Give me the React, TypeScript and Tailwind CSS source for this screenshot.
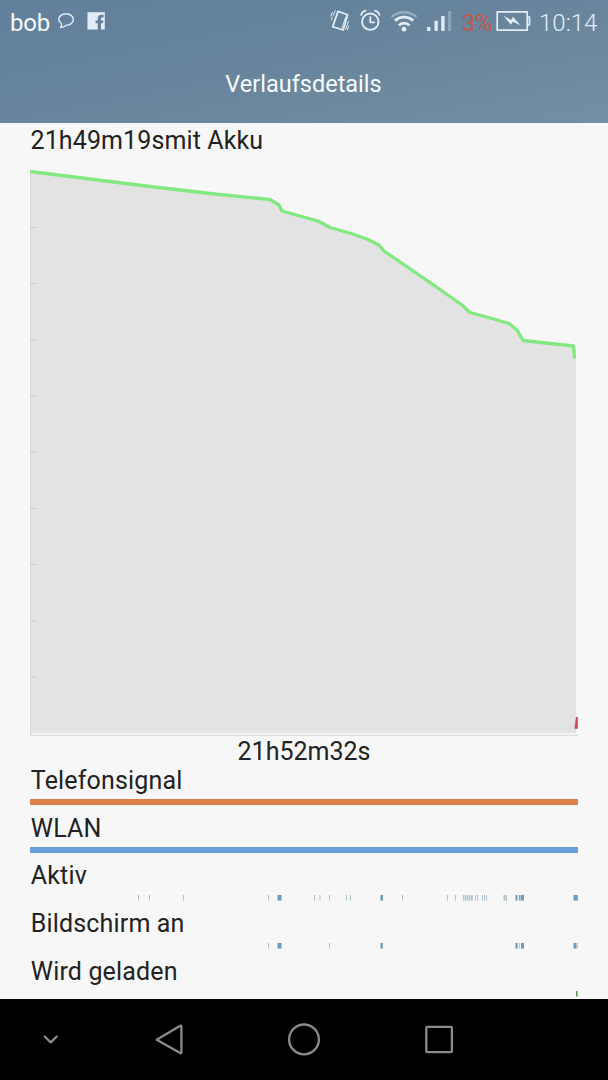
import React from "react";

type Mark = { x: number; w: number; tone: "faint" | "pale" | "solid" | "green" };

const tones: Record<Mark["tone"], string> = {
  faint: "#b3c1c8",
  pale: "#a9c7d2",
  solid: "#6f9ac0",
  green: "#5f9457",
};

const activeMarks: Mark[] = [
  { x: 138, w: 1, tone: "faint" },
  { x: 149, w: 1, tone: "faint" },
  { x: 183, w: 1, tone: "faint" },
  { x: 268, w: 1, tone: "faint" },
  { x: 277.5, w: 4, tone: "solid" },
  { x: 314, w: 1, tone: "faint" },
  { x: 319.5, w: 1, tone: "faint" },
  { x: 329, w: 1, tone: "faint" },
  { x: 346, w: 1, tone: "faint" },
  { x: 350, w: 1, tone: "faint" },
  { x: 380, w: 1, tone: "pale" },
  { x: 381, w: 2, tone: "solid" },
  { x: 402, w: 1, tone: "faint" },
  { x: 447, w: 1, tone: "faint" },
  { x: 455, w: 1, tone: "faint" },
  { x: 463, w: 1.4, tone: "pale" },
  { x: 465, w: 1.4, tone: "pale" },
  { x: 467, w: 1.4, tone: "pale" },
  { x: 469, w: 1.4, tone: "pale" },
  { x: 471, w: 1.8, tone: "pale" },
  { x: 475, w: 1, tone: "faint" },
  { x: 477, w: 1, tone: "pale" },
  { x: 482, w: 1, tone: "faint" },
  { x: 484, w: 1, tone: "pale" },
  { x: 486, w: 1, tone: "faint" },
  { x: 503.5, w: 1.5, tone: "faint" },
  { x: 505.5, w: 1.5, tone: "faint" },
  { x: 515.5, w: 2, tone: "solid" },
  { x: 519, w: 1, tone: "solid" },
  { x: 520.5, w: 3.5, tone: "solid" },
  { x: 573.5, w: 4.3, tone: "solid" },
];

const screenMarks: Mark[] = [
  { x: 268, w: 1, tone: "faint" },
  { x: 277.5, w: 4, tone: "solid" },
  { x: 329, w: 1, tone: "faint" },
  { x: 380, w: 1, tone: "pale" },
  { x: 381, w: 1.8, tone: "solid" },
  { x: 515.5, w: 2.2, tone: "solid" },
  { x: 519, w: 1, tone: "pale" },
  { x: 521, w: 3, tone: "solid" },
  { x: 573.5, w: 2.5, tone: "solid" },
  { x: 576, w: 1.8, tone: "faint" },
];

const chargingMarks: Mark[] = [{ x: 576, w: 1.6, tone: "green" }];

const gridLines = [227.5, 283.5, 340, 396, 452, 508.5, 564.5, 621, 677];

function StatusBar() {
  return (
    <div className="flex h-[44px] items-center pl-[10px] pr-[10px] text-[#e1edf7]">
      <span className="w-[42px] pt-[2px] text-[24px] leading-[42px] tracking-[-0.2px] text-[#f4f9fc]">bob</span>
      <svg className="ml-[5px] h-[44px] w-[18px]" viewBox="57 0 18 44" fill="none" stroke="currentColor" strokeWidth="1.4">
        <path d="M61.5 23.5C59.5 22.3 58.7 20.9 58.7 19.5C58.7 16.2 62 13.7 66 13.7S73.3 16.2 73.3 19.5S70 25.3 66.5 25.3C64.5 26.8 62.8 27.5 60.6 27.5C61.6 26.2 62 25 61.5 23.5Z" strokeLinejoin="round" />
      </svg>
      <svg className="ml-[12px] h-[44px] w-[18px]" viewBox="87 0 18 44">
        <path fill="currentColor" fillRule="evenodd" d="M87.5 12.2H104.8V29.6H101V23.2H103L103.4 20.4H101V18.8C101 17.8 101.5 17.4 102.3 17.4H103.6V14.8H101.5C98.9 14.8 97.7 16.4 97.7 18.6V20.4H95.6V23.2H97.7V29.6H87.5Z" />
      </svg>
      <svg className="ml-auto h-[44px] w-[123px]" viewBox="330 0 123 44" fill="none" stroke="currentColor" strokeLinecap="round" strokeLinejoin="round">
        <path d="M338 11.4L347.6 14.8L343.2 30L332.7 26.7Z" strokeWidth="1.7" />
        <path d="M345.7 17L342.1 28M337.3 14L333.4 25" strokeWidth="1" />
        <path d="M331 16.3L332.2 12.5M333.3 15.3L335.2 10.6M331.5 20L332.2 17.7M345.7 29.4L348.3 21.5M347.4 29.5L348.8 26" strokeWidth="1" />
        <circle cx="370.3" cy="21.7" r="8.2" strokeWidth="1.9" />
        <path d="M370.3 17.2V22.3H374.1" strokeWidth="1.8" />
        <path d="M361.1 15C361.6 12.9 363.3 11.1 365.6 10.6M375 10.6C377.4 11.1 379 12.9 379.5 15" strokeWidth="1.7" />
        <path d="M391.5 17C398.5 10.6 409.6 10.6 416.6 17" strokeWidth="2.6" strokeLinecap="butt" opacity=".38" />
        <path d="M395 20.8C400 15.8 408.2 15.8 413.2 20.8M398.8 25.4C401.7 22.3 406.6 22.3 409.5 25.4" strokeWidth="2.8" strokeLinecap="butt" />
        <circle cx="404" cy="29.2" r="2.4" fill="currentColor" stroke="none" />
        <g fill="currentColor" stroke="none">
          <rect x="427" y="27" width="3.5" height="4" rx=".7" />
          <rect x="434.5" y="20.7" width="3.3" height="10.3" rx=".7" />
          <rect x="441.2" y="16" width="3.4" height="15" rx=".7" />
          <rect x="448" y="11" width="3.2" height="20" rx=".7" opacity=".3" />
        </g>
      </svg>
      <span className="ml-[9px] w-[33px] whitespace-nowrap pt-[2px] text-[24px] leading-[42px] tracking-[-0.8px] text-[#c25848]">3%</span>
      <svg className="ml-[1px] h-[44px] w-[35px]" viewBox="496 0 35 44">
        <path d="M497.2 11.8H527.2V30.2H497.2ZM527.8 17H529.5V25H527.8" fill="none" stroke="currentColor" strokeWidth="1.7" strokeLinejoin="round" />
        <path d="M503.4 15.7L511.2 20L513 16.7L520.3 25.3L512.8 21.8L510.8 24.8Z" fill="currentColor" />
      </svg>
      <span className="ml-[8px] w-[59px] whitespace-nowrap pt-[2px] text-[24px] font-light leading-[42px]">10:14</span>
    </div>
  );
}

function HistoryChart() {
  return (
    <svg className="block h-[578px] w-[548px]" viewBox="30 158 548 578">
      <path d="M30 171.5L150 186L210 193.5L270 199.5L279 205L282 211L318 221L330 227.5L353 234.5L368 239.5L379 245L384 251L462 305L470 312.5L509 323.5L517 330L523 340.5L573.5 346L576 358V733H30Z" fill="#e3e3e3" />
      <path d="M30.5 171V735" stroke="#dadada" strokeWidth="1" />
      {gridLines.map((y) => (
        <path key={y} d={`M30 ${y}H37`} stroke="#cecece" strokeWidth="1" />
      ))}
      <path d="M30 735.3H578" stroke="#d8d8d8" strokeWidth="1" />
      <path d="M30 171.5L90 179L150 186.5L210 193.5L270 199.5L279 205L282 211L318 221L330 227.5L353 234L368 239.5L379 245L384 251L425 279L462 305L470 312.5L492 318.5L509 323.5L517 330L523 340.5L573.5 346L574.7 358.5" fill="none" stroke="#82e880" strokeWidth="3.3" strokeLinejoin="round" />
      <path d="M576 717H577.8V728.7H574.4Z" fill="#d04a54" />
    </svg>
  );
}

function Track({ label, fill, marks }: { label: string; fill?: string; marks?: Mark[] }) {
  return (
    <div className="mb-[10px]">
      <div className={`h-[26px] pl-[0.8px] text-[25px] leading-[26px] tracking-[0.16px] ${fill ? "pt-px" : "pt-0"}`}>
        {label}
      </div>
      <svg className="mt-[6px] block h-[6px] w-[548px]" viewBox="30 0 548 6">
        {fill && <rect x="30" y="0" width="548" height="6" fill={fill} />}
        {marks?.map((m) => (
          <rect key={m.x} x={m.x} y="0" width={m.w} height="5.6" fill={tones[m.tone]} />
        ))}
      </svg>
    </div>
  );
}

function NavigationBar() {
  return (
    <nav className="h-[81px] bg-black">
      <svg className="block h-[81px] w-[608px]" viewBox="0 999 608 81" fill="none" stroke="#8b8b8b" strokeWidth="2.3" strokeLinejoin="round" strokeLinecap="round">
        <path d="M44.7 1036.5L50.7 1042.4L56.7 1036.5" />
        <path d="M156.7 1039.7L180.2 1025.8Q181.4 1025.2 181.4 1026.7V1052Q181.4 1053.8 180.2 1053Z" />
        <circle cx="304" cy="1039.4" r="14.9" />
        <rect x="426.3" y="1026.8" width="25.6" height="25.4" rx="1" />
      </svg>
    </nav>
  );
}

export default function App() {
  return (
    <div className="flex h-[1080px] w-[608px] flex-col overflow-hidden bg-[#f7f7f7] font-['Roboto',sans-serif] text-[#222222]">
      <header className="h-[123px] shrink-0 bg-linear-to-br from-[#627f9b] via-[#68859d] to-[#748fa3]">
        <StatusBar />
        <h1 className="h-[79px] pr-px text-center text-[23.5px] leading-[80px] text-[#f7fbfd]">Verlaufsdetails</h1>
      </header>
      <main className="h-[876px] shrink-0 px-[30px]">
        <div className="h-[35px] pl-[0.5px] text-[25px] leading-[35px] tracking-[0.12px]">21h49m19smit Akku</div>
        <HistoryChart />
        <div className="h-[31px] text-center text-[25px] leading-[31px]">21h52m32s</div>
        <Track label="Telefonsignal" fill="#dc7f49" />
        <Track label="WLAN" fill="#689fdb" />
        <Track label="Aktiv" marks={activeMarks} />
        <Track label="Bildschirm an" marks={screenMarks} />
        <Track label="Wird geladen" marks={chargingMarks} />
      </main>
      <NavigationBar />
    </div>
  );
}
